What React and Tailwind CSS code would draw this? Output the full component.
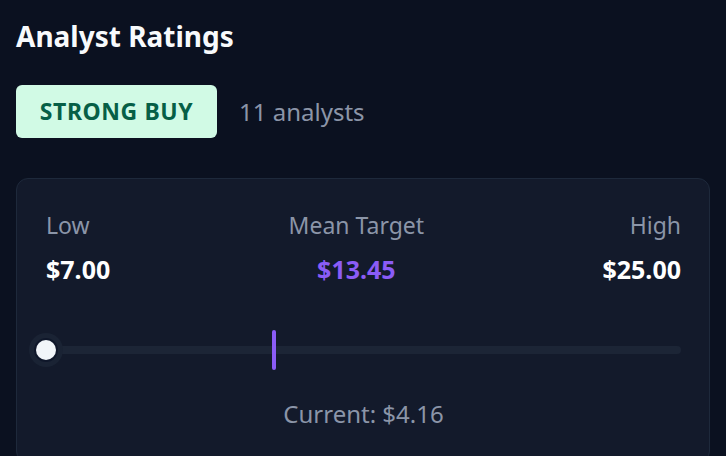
import React from 'react';

const App = () => {
  const low = 7.0;
  const high = 25.0;
  const mean = 13.45;
  const current = 4.16;
  const pct = (v) => Math.max(0, Math.min(100, ((v - low) / (high - low)) * 100));

  return (
    <div className="w-[726px] h-[456px] overflow-hidden bg-[#0b1120] px-4 pt-[18px] font-['Noto_Sans',sans-serif]">
      <h2 className="text-[28px] leading-9 font-bold text-[#f8fafc]">Analyst Ratings</h2>

      <div className="flex items-center gap-[22px] mt-[31px]">
        <div className="h-[53px] w-[201px] rounded-md bg-[#d1fae5] flex items-center justify-center text-[23px] font-bold tracking-wide text-[#065f46]">
          STRONG BUY
        </div>
        <span className="text-[24px] text-[#8b95a8]">11 analysts</span>
      </div>

      <div className="mt-10 rounded-xl border border-[#1e293b] bg-[#131a2b] pl-[29px] pr-[28px] pt-[32px] pb-8">
        <div className="flex justify-between">
          <div className="flex flex-col gap-[15px]">
            <span className="text-[23px] leading-7 text-[#8b95a8]">Low</span>
            <span className="text-[25px] leading-[30px] font-bold text-white">${low.toFixed(2)}</span>
          </div>
          <div className="flex flex-col items-center gap-[15px]">
            <span className="text-[23px] leading-7 text-[#8b95a8]">Mean Target</span>
            <span className="text-[25px] leading-[30px] font-bold text-[#8b5cf6]">${mean.toFixed(2)}</span>
          </div>
          <div className="flex flex-col items-end gap-[15px]">
            <span className="text-[23px] leading-7 text-[#8b95a8]">High</span>
            <span className="text-[25px] leading-[30px] font-bold text-white">${high.toFixed(2)}</span>
          </div>
        </div>

        <div className="relative mt-[46px] h-10">
          <div className="absolute left-0 right-0 top-4 h-2 rounded-full bg-[#1c2536]" />
          <div
            className="absolute top-0 h-10 w-[4px] -translate-x-1/2 rounded-full bg-[#8b5cf6]"
            style={{ left: `${pct(mean)}%` }}
          />
          <div
            className="absolute top-[3px] h-[34px] w-[34px] -translate-x-1/2 rounded-full bg-[#1a2334] flex items-center justify-center"
            style={{ left: `${pct(current)}%` }}
          >
            <div className="h-6 w-6 rounded-full bg-[#0f172a] flex items-center justify-center">
              <div className="h-5 w-5 rounded-full bg-[#f1f5f9]" />
            </div>
          </div>
        </div>

        <div className="mt-[28px] text-center text-[24px] leading-8 text-[#8b95a8]">Current: ${current.toFixed(2)}</div>
      </div>
    </div>
  );
};

export default App;
